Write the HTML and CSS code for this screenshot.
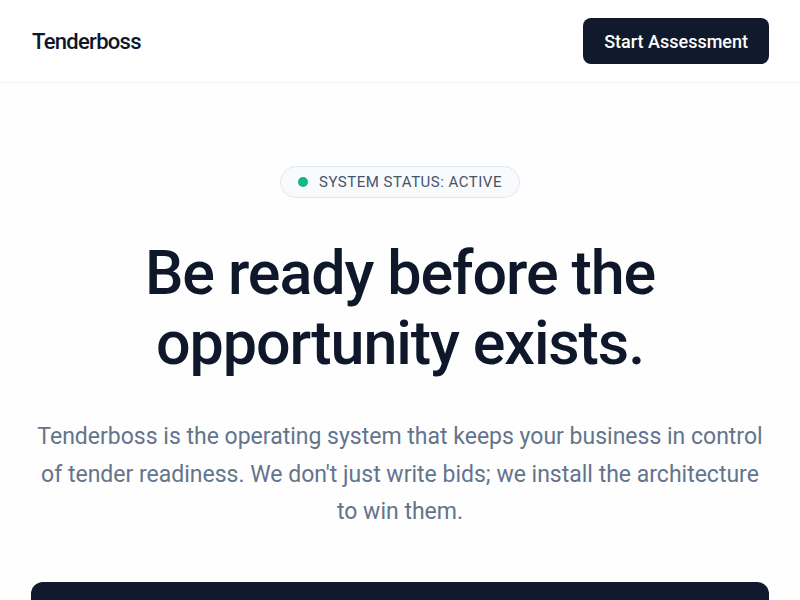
FILE: index.html
```html
<!DOCTYPE html>
<html lang="en">
<head>
  <meta charset="UTF-8" />
  <meta name="viewport" content="width=device-width, initial-scale=1.0"/>
  <title>Tenderboss</title>
  <link rel="stylesheet" href="styles.css">
</head>
<body>
  <header class="topbar">
    <div class="logo">Tenderboss</div>
    <button class="btn-dark">Start Assessment</button>
  </header>

  <main class="hero">
    <div class="status">
      <span class="dot"></span>
      SYSTEM STATUS: ACTIVE
    </div>
    <h1>Be ready before the<br>opportunity exists.</h1>
    <p class="lead">Tenderboss is the operating system that keeps your business in control of tender readiness. We don't just write bids; we install the architecture to win them.</p>
    <div class="panel"></div>
  </main>
</body>
</html>
```

FILE: styles.css
```css
body {
  margin: 0;
  font-family: Roboto, "Liberation Sans", sans-serif;
  background: #fefefe;
  color: #0f172a;
}
.topbar {
  display: flex;
  justify-content: space-between;
  align-items: center;
  height: 82px;
  padding: 0 31px 0 32px;
  background: #fff;
  border-bottom: 1px solid #f1f3f5;
}
.logo {
  font-size: 22px;
  font-weight: 500;
  letter-spacing: -0.7px;
  color: #0f172a;
}
.btn-dark {
  font-family: inherit;
  font-size: 18px;
  font-weight: 500;
  color: #fff;
  background: #111a2c;
  border: none;
  border-radius: 8px;
  height: 46px;
  padding: 0 21px;
}
.hero {
  display: flex;
  flex-direction: column;
  align-items: center;
  padding: 83px 31px 0;
  text-align: center;
}
.status {
  display: flex;
  align-items: center;
  gap: 11px;
  height: 30px;
  padding: 0 17px;
  border: 1px solid #e2e8f0;
  border-radius: 999px;
  background: #f8fafc;
  font-size: 15px;
  font-weight: 400;
  letter-spacing: 0.5px;
  color: #475569;
}
.dot {
  width: 10px;
  height: 10px;
  border-radius: 50%;
  background: #10b981;
}
h1 {
  margin: 40px 0 0;
  font-size: 61px;
  font-weight: 500;
  line-height: 70px;
  letter-spacing: -1.1px;
  color: #0f172a;
}
.lead {
  margin: 40px 0 0;
  font-size: 23px;
  line-height: 37.5px;
  color: #64748b;
}
.panel {
  align-self: stretch;
  margin-top: 51px;
  height: 120px;
  background: #111a2c;
  border-radius: 12px;
}
```
